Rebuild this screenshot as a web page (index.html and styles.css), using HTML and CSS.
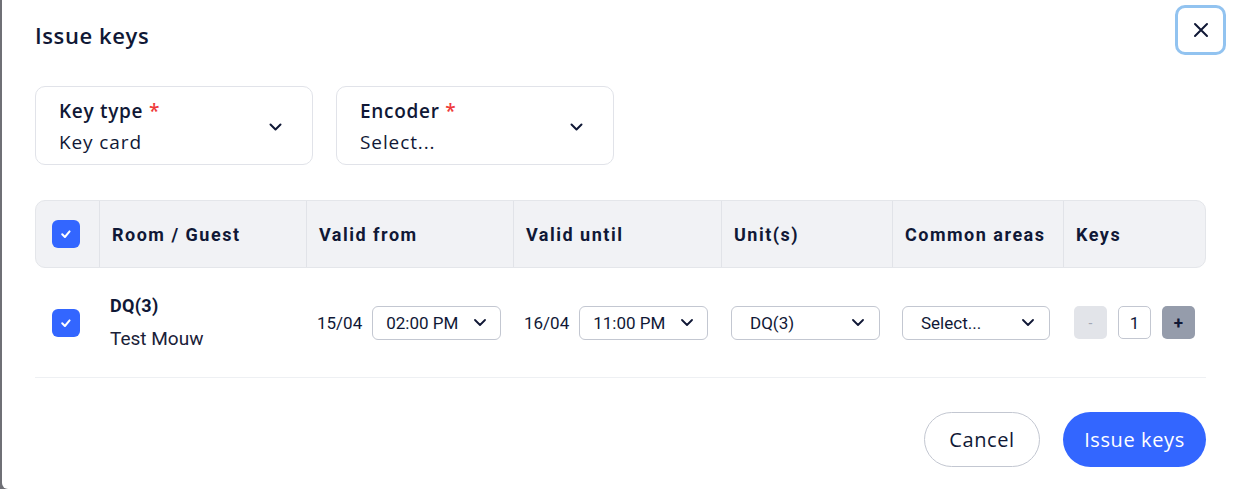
FILE: index.html
```html
<!DOCTYPE html>
<html lang="en">
<head>
<meta charset="utf-8">
<title>Issue keys</title>
<link rel="stylesheet" href="styles.css">
</head>
<body>
<div class="modal">
  <div class="modal-header">
    <h1 class="title">Issue keys</h1>
    <button class="close" aria-label="Close">
      <svg width="16" height="16" viewBox="0 0 16 16"><path d="M2 2L14 14M14 2L2 14" stroke="#101836" stroke-width="2" stroke-linecap="round"/></svg>
    </button>
  </div>

  <div class="selects">
    <div class="big-select">
      <div class="bs-text">
        <div class="bs-label">Key type <span class="req">*</span></div>
        <div class="bs-value">Key card</div>
      </div>
      <svg class="chev" width="13" height="8" viewBox="0 0 13 8"><path d="M1.5 1.5L6.5 6.5L11.5 1.5" fill="none" stroke="#101836" stroke-width="2" stroke-linecap="round" stroke-linejoin="round"/></svg>
    </div>
    <div class="big-select">
      <div class="bs-text">
        <div class="bs-label">Encoder <span class="req">*</span></div>
        <div class="bs-value">Select...</div>
      </div>
      <svg class="chev" width="13" height="8" viewBox="0 0 13 8"><path d="M1.5 1.5L6.5 6.5L11.5 1.5" fill="none" stroke="#101836" stroke-width="2" stroke-linecap="round" stroke-linejoin="round"/></svg>
    </div>
  </div>

  <div class="table">
    <div class="thead">
      <div class="th th-check"><span class="checkbox"><svg width="16" height="16" viewBox="0 0 16 16"><path d="M4.2 8.3L6.9 11L11.6 5.4" fill="none" stroke="#fff" stroke-width="2" stroke-linecap="round" stroke-linejoin="round"/></svg></span></div>
      <div class="th">Room / Guest</div>
      <div class="th">Valid from</div>
      <div class="th">Valid until</div>
      <div class="th">Unit(s)</div>
      <div class="th">Common areas</div>
      <div class="th th-last">Keys</div>
    </div>
    <div class="trow">
      <div class="td td-check"><span class="checkbox"><svg width="16" height="16" viewBox="0 0 16 16"><path d="M4.2 8.3L6.9 11L11.6 5.4" fill="none" stroke="#fff" stroke-width="2" stroke-linecap="round" stroke-linejoin="round"/></svg></span></div>
      <div class="td td-room">
        <div class="room">DQ(3)</div>
        <div class="guest">Test Mouw</div>
      </div>
      <div class="td td-date">
        <span class="date">15/04</span>
        <div class="small-select time"><span>02:00 PM</span><svg width="12" height="7" viewBox="0 0 12 7"><path d="M1 1L6 6L11 1" fill="none" stroke="#101836" stroke-width="1.8" stroke-linecap="round" stroke-linejoin="round"/></svg></div>
      </div>
      <div class="td td-date">
        <span class="date">16/04</span>
        <div class="small-select time"><span>11:00 PM</span><svg width="12" height="7" viewBox="0 0 12 7"><path d="M1 1L6 6L11 1" fill="none" stroke="#101836" stroke-width="1.8" stroke-linecap="round" stroke-linejoin="round"/></svg></div>
      </div>
      <div class="td">
        <div class="small-select wide"><span>DQ(3)</span><svg width="12" height="7" viewBox="0 0 12 7"><path d="M1 1L6 6L11 1" fill="none" stroke="#101836" stroke-width="1.8" stroke-linecap="round" stroke-linejoin="round"/></svg></div>
      </div>
      <div class="td">
        <div class="small-select wide common"><span>Select...</span><svg width="12" height="7" viewBox="0 0 12 7"><path d="M1 1L6 6L11 1" fill="none" stroke="#101836" stroke-width="1.8" stroke-linecap="round" stroke-linejoin="round"/></svg></div>
      </div>
      <div class="td td-keys">
        <button class="step minus">-</button>
        <div class="count">1</div>
        <button class="step plus">+</button>
      </div>
    </div>
  </div>

  <div class="footer">
    <button class="btn btn-cancel">Cancel</button>
    <button class="btn btn-primary">Issue keys</button>
  </div>
</div>
</body>
</html>
```

FILE: styles.css
```css
* { box-sizing: border-box; }

html, body {
  margin: 0;
  padding: 0;
  height: 494px;
  overflow: hidden;
}

body {
  background: linear-gradient(#6f7076 489px, #ffffff 489px);
  font-family: "Open Sans", "Liberation Sans", sans-serif;
  color: #101836;
}

.modal {
  margin-left: 2px;
  height: 489px;
  background: #fff;
  border-bottom-left-radius: 6px;
  padding: 5px 28px 0 33px;
}

.modal-header {
  display: flex;
  justify-content: space-between;
  align-items: flex-start;
  height: 50px;
}

.title {
  margin: 15px 0 0 0;
  font-size: 22px;
  line-height: 30px;
  font-weight: 600;
  letter-spacing: 0.6px;
  color: #101836;
}

.close {
  width: 51px;
  height: 50px;
  margin-right: -20px;
  border: 3px solid #92c3f0;
  border-radius: 10px;
  background: #fff;
  display: flex;
  align-items: center;
  justify-content: center;
  padding: 0;
}

.selects {
  display: flex;
  gap: 23px;
  margin-top: 31px;
}

.big-select {
  width: 278px;
  height: 79px;
  border: 1px solid #e1e3e9;
  border-radius: 10px;
  padding: 0 30px 0 23px;
  display: flex;
  align-items: center;
  justify-content: space-between;
}

.bs-text { padding-top: 3px; }

.bs-label {
  font-size: 19px;
  font-weight: 600;
  line-height: 24px;
  letter-spacing: 0.7px;
}

.bs-value {
  font-size: 19px;
  line-height: 26px;
  margin-top: 6px;
  letter-spacing: 0.9px;
}

.req { color: #ef3b3b; }

.chev { margin-top: 2px; }

.table { margin-top: 35px; }

.thead {
  display: grid;
  grid-template-columns: 64px 207px 207px 208px 171px 171px 143px;
  height: 68px;
  background: #f1f2f5;
  border: 1px solid #e4e6ea;
  border-radius: 10px;
  font-family: Roboto, "Liberation Sans", sans-serif;
}

.th {
  display: flex;
  align-items: center;
  padding-left: 12px;
  font-size: 18px;
  font-weight: 700;
  letter-spacing: 1.5px;
  border-right: 1px solid #e1e3e8;
}

.th-check { padding-left: 16px; }
.th-last { border-right: none; }

.checkbox {
  width: 28px;
  height: 28px;
  border-radius: 6px;
  background: #3366ff;
  display: inline-flex;
  align-items: center;
  justify-content: center;
}

.trow {
  display: grid;
  grid-template-columns: 64px 207px 207px 208px 171px 171px 143px;
  height: 110px;
  border-bottom: 1px solid #eef0f3;
  font-family: Roboto, "Liberation Sans", sans-serif;
}

.td {
  display: flex;
  align-items: center;
  padding-left: 10px;
}

.td-check { padding-left: 17px; }

.td-room {
  flex-direction: column;
  align-items: flex-start;
  justify-content: center;
  padding-left: 11px;
}

.room {
  font-size: 18px;
  font-weight: 700;
  line-height: 22px;
  letter-spacing: 0.3px;
}

.guest {
  font-size: 19px;
  line-height: 22px;
  margin-top: 11px;
  color: #1a2138;
}

.td-date { padding-left: 11px; gap: 10px; }

.date { font-size: 17px; }

.small-select {
  height: 34px;
  border: 1px solid #c3c7d1;
  border-radius: 6px;
  display: flex;
  align-items: center;
  justify-content: space-between;
  font-size: 17px;
}

.time {
  width: 129px;
  padding: 0 14px 0 13px;
}

.wide {
  width: 149px;
  padding: 0 15px 0 18px;
}

.common { width: 148px; }

.td-keys { padding-left: 11px; gap: 11px; }

.step {
  width: 33px;
  height: 33px;
  border: none;
  border-radius: 5px;
  font-family: Roboto, "Liberation Sans", sans-serif;
  padding: 0;
}

.minus {
  background: #e2e4e9;
  color: #a3a8b4;
  font-size: 14px;
}

.plus {
  background: #959cab;
  color: #101836;
  font-size: 17px;
  font-weight: 700;
}

.count {
  width: 33px;
  height: 33px;
  border: 1px solid #c3c7d1;
  border-radius: 5px;
  display: flex;
  align-items: center;
  justify-content: center;
  font-size: 17px;
}

.footer {
  display: flex;
  justify-content: flex-end;
  gap: 23px;
  margin-top: 34px;
}

.btn {
  height: 55px;
  border-radius: 28px;
  font-family: "Open Sans", "Liberation Sans", sans-serif;
  font-size: 20px;
  letter-spacing: 0.6px;
  padding: 0;
}

.btn-cancel {
  width: 116px;
  background: #fff;
  border: 1px solid #c3c7d1;
  color: #101836;
}

.btn-primary {
  width: 143px;
  background: #3366ff;
  border: none;
  color: #fff;
}
```
